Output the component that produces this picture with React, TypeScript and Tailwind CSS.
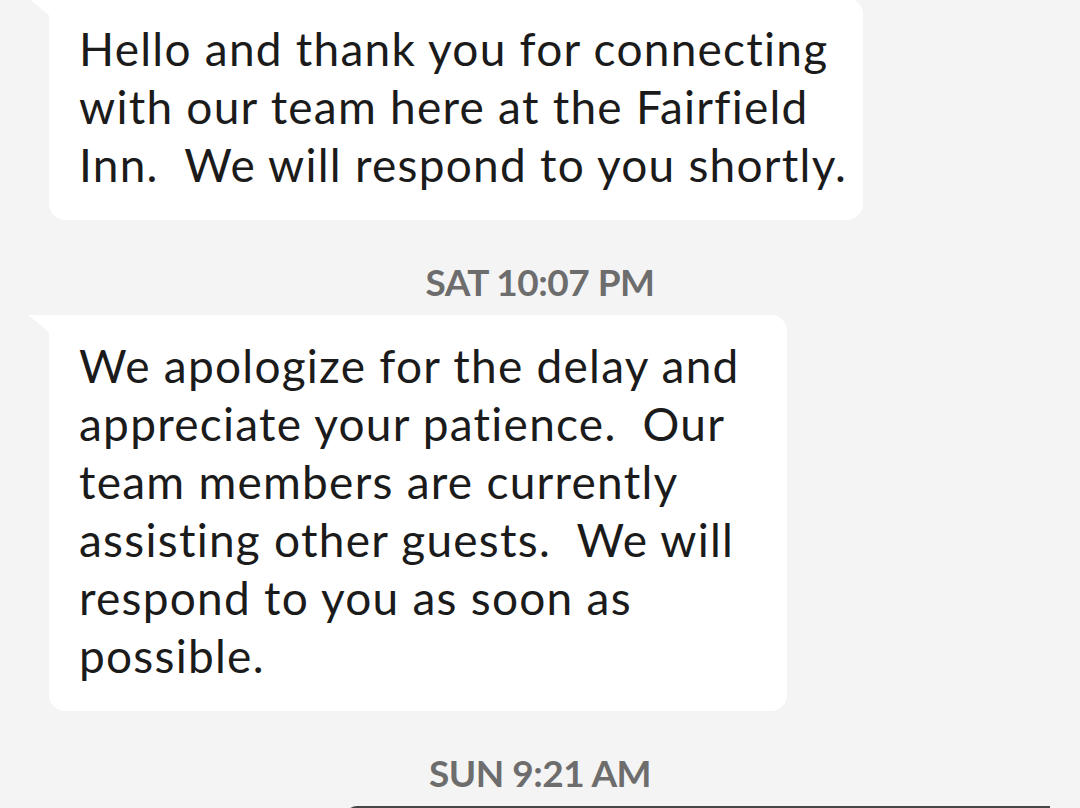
export default function App() {
  return (
    <div className="h-[808px] overflow-hidden bg-[#f4f4f4] font-['Lato',sans-serif]">
      <div className="-mt-[2px] pl-[49px]">
        <Bubble
          width="w-[814px]"
          lines={[
            "Hello and thank you for connecting",
            "with our team here at the Fairfield",
            "Inn.\u00a0 We will respond to you shortly.",
          ]}
        />
      </div>
      <Stamp text="SAT 10:07 PM" />
      <div className="pl-[49px]">
        <Bubble
          width="w-[738px]"
          lines={[
            "We apologize for the delay and",
            "appreciate your patience.\u00a0 Our",
            "team members are currently",
            "assisting other guests.\u00a0 We will",
            "respond to you as soon as",
            "possible.",
          ]}
        />
      </div>
      <Stamp text="SUN 9:21 AM" />
      <div className="relative ml-[345px] h-[12px] w-[705px] rounded-tl-2xl bg-[#474747]" />
    </div>
  )
}

function Bubble({ lines, width }: { lines: string[]; width: string }) {
  return (
    <div className={`relative ${width} rounded-2xl rounded-tl-none bg-white pt-[22px] pb-[26px] pl-[30px]`}>
      <svg className="absolute -left-[21px] top-0" width="22" height="18" viewBox="0 0 22 18">
        <path d="M0 0 H22 V18 Z" fill="#ffffff" />
      </svg>
      <p className="text-[46px] leading-[58px] tracking-[1.25px] text-[#1b1b1b] whitespace-nowrap [font-variant-ligatures:none]">
        {lines.map((l, i) => (
          <span key={i} className="block">
            {l}
          </span>
        ))}
      </p>
    </div>
  )
}

function Stamp({ text }: { text: string }) {
  return (
    <div className="flex h-[95px] justify-center pt-[40px]">
      <span className="text-[37px] leading-[1.2] font-bold tracking-[-0.5px] text-[#6d6d6d]">{text}</span>
    </div>
  )
}
